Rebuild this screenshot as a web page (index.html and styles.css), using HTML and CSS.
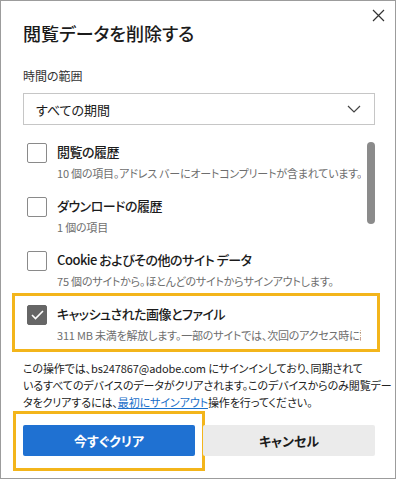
FILE: index.html
```html
<!DOCTYPE html>
<html lang="ja">
<head>
    <meta charset="UTF-8">
    <meta name="viewport" content="width=device-width, initial-scale=1.0">
    <title>閲覧データを削除する</title>
    <link rel="stylesheet" href="styles.css">
</head>
<body>
    <div class="dialog">
        <button class="close" aria-label="閉じる">
            <svg width="13" height="13" viewBox="0 0 13 13"><path d="M1 1 L12 12 M12 1 L1 12" stroke="#333" stroke-width="1.2" fill="none"/></svg>
        </button>
        <h1 class="title">閲覧データを削除する</h1>
        <div class="field-label">時間の範囲</div>
        <div class="select">
            <span>すべての期間</span>
            <svg width="14" height="8" viewBox="0 0 14 8"><path d="M1 1 L7 7 L13 1" stroke="#444" stroke-width="1.2" fill="none"/></svg>
        </div>

        <div class="list">
            <div class="item">
                <span class="box"></span>
                <div class="text">
                    <div class="name">閲覧の履歴</div>
                    <div class="desc">10 個の項目。アドレス バーにオートコンプリートが含まれています。</div>
                </div>
            </div>
            <div class="item">
                <span class="box"></span>
                <div class="text">
                    <div class="name">ダウンロードの履歴</div>
                    <div class="desc">1 個の項目</div>
                </div>
            </div>
            <div class="item">
                <span class="box"></span>
                <div class="text">
                    <div class="name">Cookie およびその他のサイト データ</div>
                    <div class="desc">75 個のサイトから。ほとんどのサイトからサインアウトします。</div>
                </div>
            </div>
            <div class="item marked">
                <span class="box checked">
                    <svg width="13" height="10" viewBox="0 0 13 10"><path d="M1 5 L4.5 8.5 L12 1" stroke="#fff" stroke-width="1.6" fill="none"/></svg>
                </span>
                <div class="text">
                    <div class="name">キャッシュされた画像とファイル</div>
                    <div class="desc">311 MB 未満を解放します。一部のサイトでは、次回のアクセス時に読み込みが遅くなります。</div>
                </div>
            </div>
            <div class="scrollbar"></div>
        </div>

        <p class="note">この操作では、bs247867@adobe.com にサインインしており、同期されて<br>いるすべてのデバイスのデータがクリアされます。このデバイスからのみ閲覧デー<br>タをクリアするには、<a href="#">最初にサインアウト</a>操作を行ってください。</p>

        <div class="actions">
            <button class="btn primary marked">今すぐクリア</button>
            <button class="btn">キャンセル</button>
        </div>
    </div>
</body>
</html>
```

FILE: styles.css
```css
* {
    box-sizing: border-box;
}
body {
    margin: 0;
    font-family: "Noto Sans CJK JP", sans-serif;
    font-feature-settings: "palt";
    color: #1b1b1b;
    background: #fff;
}
.dialog {
    position: relative;
    width: 396px;
    height: 479px;
    border: 1px solid #9c9c9c;
    padding: 17px 20px 0 22px;
    overflow: hidden;
}
.close {
    position: absolute;
    top: 8px;
    right: 10px;
    border: none;
    background: none;
    padding: 0;
    width: 13px;
    height: 13px;
}
.title {
    margin: 0;
    font-size: 18px;
    line-height: 30px;
    font-weight: 500;
}
.field-label {
    margin-top: 19px;
    font-size: 12px;
    line-height: 18px;
    color: #333;
}
.select {
    margin-top: 8px;
    height: 32px;
    border: 1px solid #c6c6c6;
    display: flex;
    align-items: center;
    justify-content: space-between;
    padding: 0 13px 0 12px;
    font-size: 13px;
}
.list {
    position: relative;
    margin-top: 17px;
    padding-left: 4px;
    height: 217px;
}
.item {
    position: relative;
    display: flex;
    gap: 10px;
    height: 54px;
}
.box {
    flex: none;
    width: 20px;
    height: 20px;
    margin-top: 1px;
    border: 1px solid #8a8a8a;
    border-radius: 2px;
    display: flex;
    align-items: center;
    justify-content: center;
}
.box.checked {
    background: #666;
    border-color: #666;
}
.text {
    min-width: 0;
    flex: 1;
    padding-right: 14px;
}
.name {
    font-size: 13px;
    line-height: 20px;
    font-weight: 500;
    letter-spacing: -0.5px;
}
.desc {
    margin-top: 2px;
    font-size: 11px;
    line-height: 18px;
    letter-spacing: -0.2px;
    color: #6e6e6e;
    white-space: nowrap;
    overflow: hidden;
}
.item.marked::after {
    content: "";
    position: absolute;
    left: -15px;
    right: -5px;
    top: -11px;
    bottom: 6px;
    border: 3px solid #f3b51b;
}
.scrollbar {
    position: absolute;
    right: 0;
    top: 0;
    width: 8px;
    height: 82px;
    border-radius: 4px;
    background: #8b8b8b;
}
.note {
    margin: 1px 0 0;
    font-size: 11px;
    line-height: 17px;
    letter-spacing: -0.1px;
    white-space: nowrap;
    color: #222;
}
.note a {
    color: #1a6fc9;
    text-decoration: underline;
}
.actions {
    margin-top: 14px;
    display: flex;
    gap: 8px;
}
.btn {
    position: relative;
    flex: 1;
    height: 31px;
    border: none;
    border-radius: 2px;
    background: #ebebeb;
    color: #1b1b1b;
    font-family: inherit;
    font-feature-settings: "palt";
    font-size: 13px;
    font-weight: 700;
}
.btn.primary {
    background: #1f71d2;
    color: #fff;
}
.btn.marked::after {
    content: "";
    position: absolute;
    left: -10px;
    right: -10px;
    top: -14px;
    bottom: -15px;
    border: 3px solid #f3b51b;
}
```
